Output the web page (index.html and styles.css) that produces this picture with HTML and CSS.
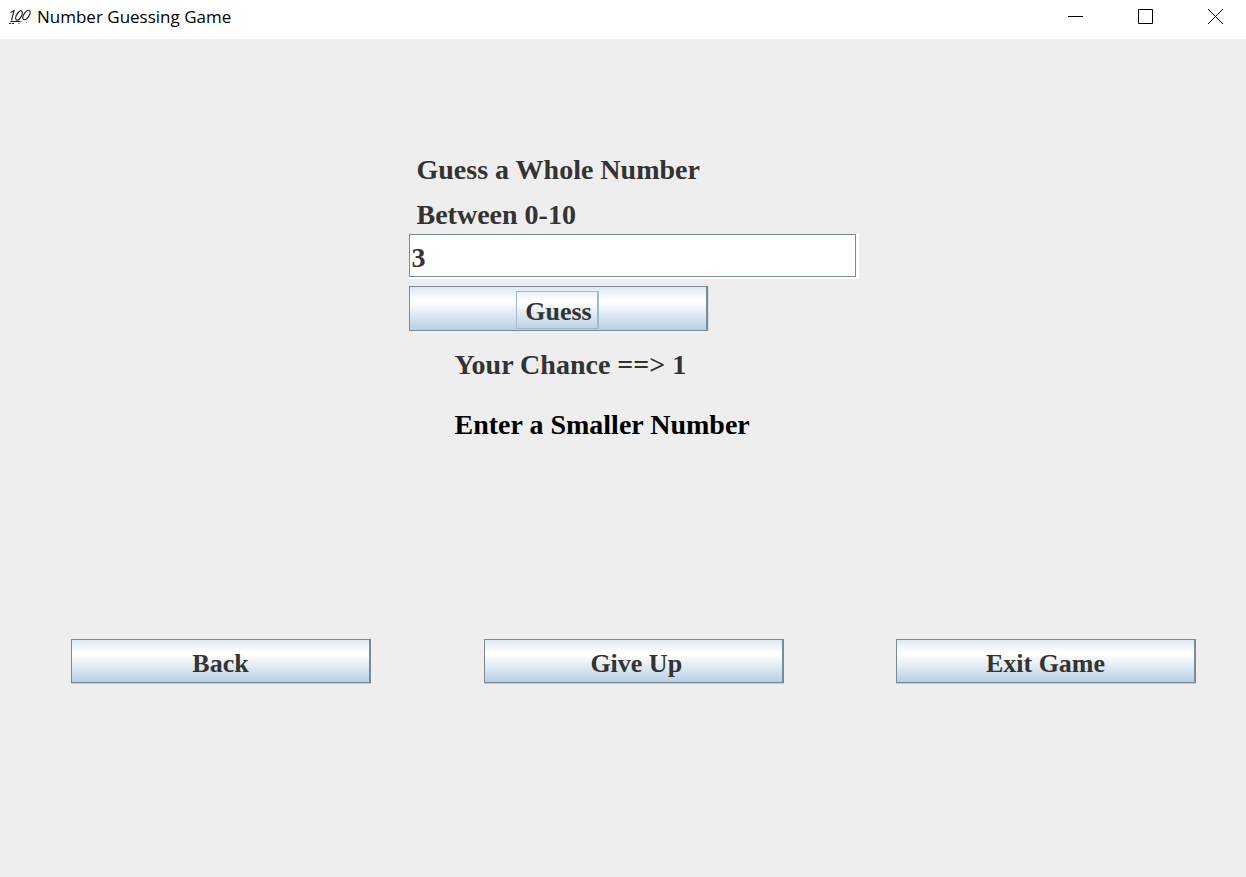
FILE: index.html
```html
<!DOCTYPE html>
<html lang="en">
<head>
<meta charset="utf-8">
<title>Number Guessing Game</title>
<link rel="stylesheet" href="styles.css">
</head>
<body>
<header class="titlebar">
  <svg class="app-icon" width="24" height="18" viewBox="0 0 24 18" fill="none" stroke="#222" stroke-width="1.1" aria-hidden="true">
    <path d="M2.5 4.5 L6 2.5 L3.5 12.5"/>
    <ellipse cx="11" cy="7.5" rx="2.4" ry="5.2" transform="rotate(28 11 7.5)"/>
    <ellipse cx="18.5" cy="7" rx="2.6" ry="5.4" transform="rotate(32 18.5 7)"/>
    <path d="M2.5 13.5 H12.5"/>
    <path d="M1 15.5 H7" stroke-dasharray="2 1"/>
    <path d="M13 13.5 H14.5 M18 14.5 H19 M10 15.5 H12" stroke="#999"/>
  </svg>
  <h1 class="title">Number Guessing Game</h1>
  <div class="controls">
    <button class="control" type="button" aria-label="Minimize"><svg width="15" height="15" viewBox="0 0 15 15"><path d="M0 7.5H15"/></svg></button>
    <button class="control" type="button" aria-label="Maximize"><svg width="15" height="15" viewBox="0 0 15 15"><path d="M.5 .5H14.5V14.5H.5Z"/></svg></button>
    <button class="control" type="button" aria-label="Close"><svg width="15" height="15" viewBox="0 0 15 15"><path d="M0 0L15 15M15 0L0 15"/></svg></button>
  </div>
</header>
<main class="game">
  <form class="guess-form">
    <label class="prompt" for="guess">
      <span class="line">Guess a Whole Number</span>
      <span class="line">Between 0-10</span>
    </label>
    <input class="field" id="guess" type="text" value="3" autocomplete="off">
    <button class="button" type="button"><span class="focus-ring">Guess</span></button>
    <div class="status">
      <p class="line">Your Chance ==&gt; 1</p>
      <p class="line hint">Enter a Smaller Number</p>
    </div>
  </form>
  <nav class="actions">
    <button class="button" type="button">Back</button>
    <button class="button" type="button">&nbsp;Give Up</button>
    <button class="button" type="button">Exit Game</button>
  </nav>
</main>
</body>
</html>
```
FILE: styles.css
```css
* { box-sizing: border-box; }

body {
  margin: 0;
  min-height: 100vh;
  background: #eeeeee;
  color: #333333;
  font-family: "Liberation Serif", "Times New Roman", serif;
  font-weight: bold;
}

.titlebar {
  display: flex;
  align-items: center;
  height: 39px;
  padding: 0 23px 6px 8px;
  background: #ffffff;
  color: #000000;
}

.app-icon { margin-right: 5px; }

.title {
  margin: 0;
  font: 17px/24px "Open Sans", "Noto Sans", sans-serif;
}

.controls {
  display: flex;
  gap: 55px;
  margin-left: auto;
}

.control {
  display: flex;
  padding: 0;
  border: 0;
  background: none;
}

.control svg {
  fill: none;
  stroke: #000000;
  stroke-width: 1;
}

.game { padding: 112px 50px 40px 71px; }

.guess-form {
  display: flex;
  flex-direction: column;
  align-items: stretch;
  max-width: 450px;
  margin: 0 auto;
}

.prompt {
  display: flex;
  flex-direction: column;
  gap: 7px;
  padding-left: 8px;
}

.line {
  margin: 0;
  font-size: 28px;
  line-height: 38px;
}

.field {
  min-width: 0;
  height: 43px;
  margin: 0 3px 2px 0;
  padding: 4px 2px 0;
  border: 1px solid #7a8a99;
  border-radius: 0;
  background: #ffffff;
  box-shadow: 0 2px #ffffff, 3px 0 #ffffff, 3px 2px #ffffff;
  color: inherit;
  font: inherit;
  font-size: 28px;
  outline: 0;
}

.button {
  display: flex;
  align-items: center;
  justify-content: center;
  width: 300px;
  height: 44px;
  padding: 5px 0 0;
  border: 1px solid #7a8a99;
  border-right-width: 2px;
  background: linear-gradient(#dde8f3, #ffffff 30%, #ffffff 35%, #b8cfe5);
  box-shadow: 0 1px #b8cfe5;
  color: inherit;
  font: inherit;
  font-size: 26px;
}

.guess-form .button {
  width: 299px;
  height: 45px;
  margin-top: 7px;
  padding: 2px 0 0;
  box-shadow: 1px 0 #d3e1ee;
}

.focus-ring {
  padding: 4px 5px 0 8px;
  border: 1px solid #a3b8cc;
  border-right-width: 2px;
  line-height: 32px;
}

.status {
  display: flex;
  flex-direction: column;
  gap: 22px;
  padding: 15px 0 0 46px;
}

.hint { color: #000000; }

.actions {
  display: flex;
  flex-wrap: wrap;
  justify-content: space-between;
  gap: 24px;
  margin-top: 195px;
}
```
